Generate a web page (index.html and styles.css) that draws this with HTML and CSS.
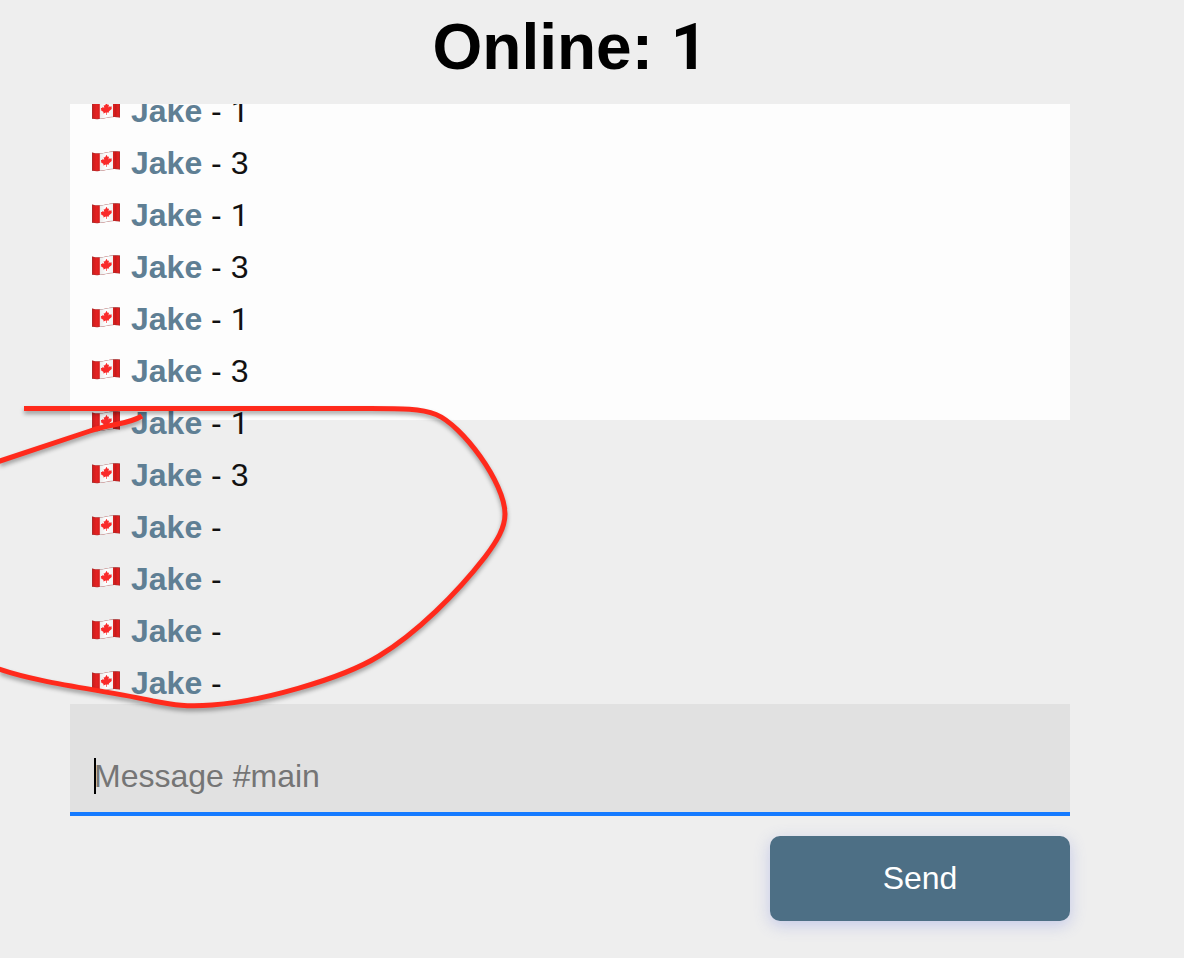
FILE: index.html
```html
<!DOCTYPE html>
<html lang="en">
<head>
<meta charset="utf-8">
<title>Chat</title>
<link rel="stylesheet" href="styles.css">
</head>
<body>
<svg class="defs" aria-hidden="true">
  <defs>
    <linearGradient id="red" x1="0" x2="1" y1="0" y2="0">
      <stop offset="0" stop-color="#c91c1c"/><stop offset=".16" stop-color="#e32222"/><stop offset=".3" stop-color="#d81e1e"/>
      <stop offset=".7" stop-color="#e62424"/><stop offset=".84" stop-color="#c81b1b"/><stop offset=".93" stop-color="#e22020"/><stop offset="1" stop-color="#cf1b1b"/>
    </linearGradient>
    <linearGradient id="cloth" x1="0" x2="1" y1="0" y2="0">
      <stop offset="0" stop-color="#ececec"/><stop offset=".5" stop-color="#fff"/><stop offset="1" stop-color="#f2f2f2"/>
    </linearGradient>
    <clipPath id="wave"><path d="M0 1.4C5 2.8 9 2.4 14 1.4S23 0 28 .6V18.6C23 17.6 19 18 14 19.1S5 20.6 0 19.8Z"/></clipPath>
    <symbol id="flag" viewBox="0 0 28 21">
      <g clip-path="url(#wave)">
        <path fill="url(#red)" d="M0 0H28V21H0Z"/>
        <path fill="url(#cloth)" d="M7.8 0H21V21H7.8Z"/>
        <path d="M0 1.4C5 2.8 9 2.4 14 1.4S23 0 28 .6V18.6C23 17.6 19 18 14 19.1S5 20.6 0 19.8Z" fill="none" stroke="#555" stroke-opacity=".4"/>
      </g>
      <path fill="#f92a2a" d="M14.5 3.8l1.3 2.1 1.2-.5-.5 3 1.5-1.5.4.9 1.5-.3-.5 1.7.6.5-3.2 2.8.3 1.1-2.4-.2.1 2.7h-.6l-.2-2.6-2.7.9.2-1.3-2.9-2.1.7-.6-.5-1.5 1.5.1.3-1.2 1.6 1.3-.5-3.1 1.3.4z"/>
    </symbol>
  </defs>
</svg>
<main class="chat">
  <h1 class="title">Online: <span class="one">1</span></h1>
  <ul class="messages">
    <li class="message"><svg class="flag"><use href="#flag"/></svg><span><b class="name">Jake</b> - <span class="one">1</span></span></li>
    <li class="message"><svg class="flag"><use href="#flag"/></svg><span><b class="name">Jake</b> - 3</span></li>
    <li class="message"><svg class="flag"><use href="#flag"/></svg><span><b class="name">Jake</b> - <span class="one">1</span></span></li>
    <li class="message"><svg class="flag"><use href="#flag"/></svg><span><b class="name">Jake</b> - 3</span></li>
    <li class="message"><svg class="flag"><use href="#flag"/></svg><span><b class="name">Jake</b> - <span class="one">1</span></span></li>
    <li class="message"><svg class="flag"><use href="#flag"/></svg><span><b class="name">Jake</b> - 3</span></li>
    <li class="message"><svg class="flag"><use href="#flag"/></svg><span><b class="name">Jake</b> - <span class="one">1</span></span></li>
    <li class="message"><svg class="flag"><use href="#flag"/></svg><span><b class="name">Jake</b> - 3</span></li>
    <li class="message"><svg class="flag"><use href="#flag"/></svg><span><b class="name">Jake</b> -</span></li>
    <li class="message"><svg class="flag"><use href="#flag"/></svg><span><b class="name">Jake</b> -</span></li>
    <li class="message"><svg class="flag"><use href="#flag"/></svg><span><b class="name">Jake</b> -</span></li>
    <li class="message"><svg class="flag"><use href="#flag"/></svg><span><b class="name">Jake</b> -</span></li>
  </ul>
  <div class="field"><span class="caret"></span><span class="placeholder">Message #main</span></div>
  <button class="send">Send</button>
</main>
<svg class="annotation" viewBox="0 0 1184 958" aria-hidden="true">
  <path d="M24 408.5H360C400 408.5 420 408 436 414.500C462 425 505 483 505 514C505 528 497 541 485 557C457 593 417 633 379 656C340 680 258 702 212 705C187 707 174 705 153 701C105 690 40 684 -4 668"/>
  <path d="M-6 463L90 431C113 423 127 425 142 416"/>
</svg>
</body>
</html>
```
FILE: styles.css
```css
* { box-sizing: border-box; }

body {
  margin: 0;
  height: 958px;
  overflow: hidden;
  background: #eee;
  color: #000;
  font-family: "Liberation Sans", Arial, sans-serif;
  font-size: 32px;
}

.defs { position: absolute; width: 0; height: 0; }

.chat {
  display: flex;
  flex-direction: column;
  width: 1000px;
  margin-left: 70px;
}

.title {
  height: 104px;
  margin: 0;
  padding-top: 10px;
  font-size: 64px;
  line-height: 74px;
  text-align: center;
}

/* Numeral one without a foot serif */
.one {
  font-family: Roboto, "Liberation Sans", sans-serif;
  line-height: 1;
}

.messages {
  height: 600px;
  margin: 0;
  padding: 0 22px;
  overflow: hidden;
  list-style: none;
  background: linear-gradient(#fdfdfd, #fdfdfd) 0 0 / 100% 316px no-repeat;
}

.message {
  display: flex;
  gap: 11px;
  height: 52px;
  line-height: 52px;
  color: #111;
}

.message:first-child { margin-top: -19px; }

.flag {
  width: 28px;
  height: 21px;
  margin-top: 14px;
}

.name { color: #5f7f94; }

.field {
  display: flex;
  height: 112px;
  padding: 54px 24px 0;
  border-bottom: 4px solid #147aff;
  background: #e1e1e1;
  line-height: 36px;
}

.caret {
  width: 2px;
  height: 36px;
  margin-right: -2px;
  background: #000;
}

.placeholder { color: #757575; }

.send {
  align-self: flex-end;
  width: 300px;
  height: 85px;
  margin-top: 20px;
  padding: 0;
  border: 0;
  border-radius: 10px;
  background: #4d6f85;
  box-shadow: 0 4px 16px rgba(100, 115, 220, .3);
  color: #fff;
  font: inherit;
}

.annotation {
  position: absolute;
  top: 0;
  left: 0;
  width: 1184px;
  height: 958px;
  fill: none;
  stroke: #ff2a1c;
  stroke-width: 5;
  filter: drop-shadow(0 3px 2px rgba(0, 0, 0, .35));
}
```
